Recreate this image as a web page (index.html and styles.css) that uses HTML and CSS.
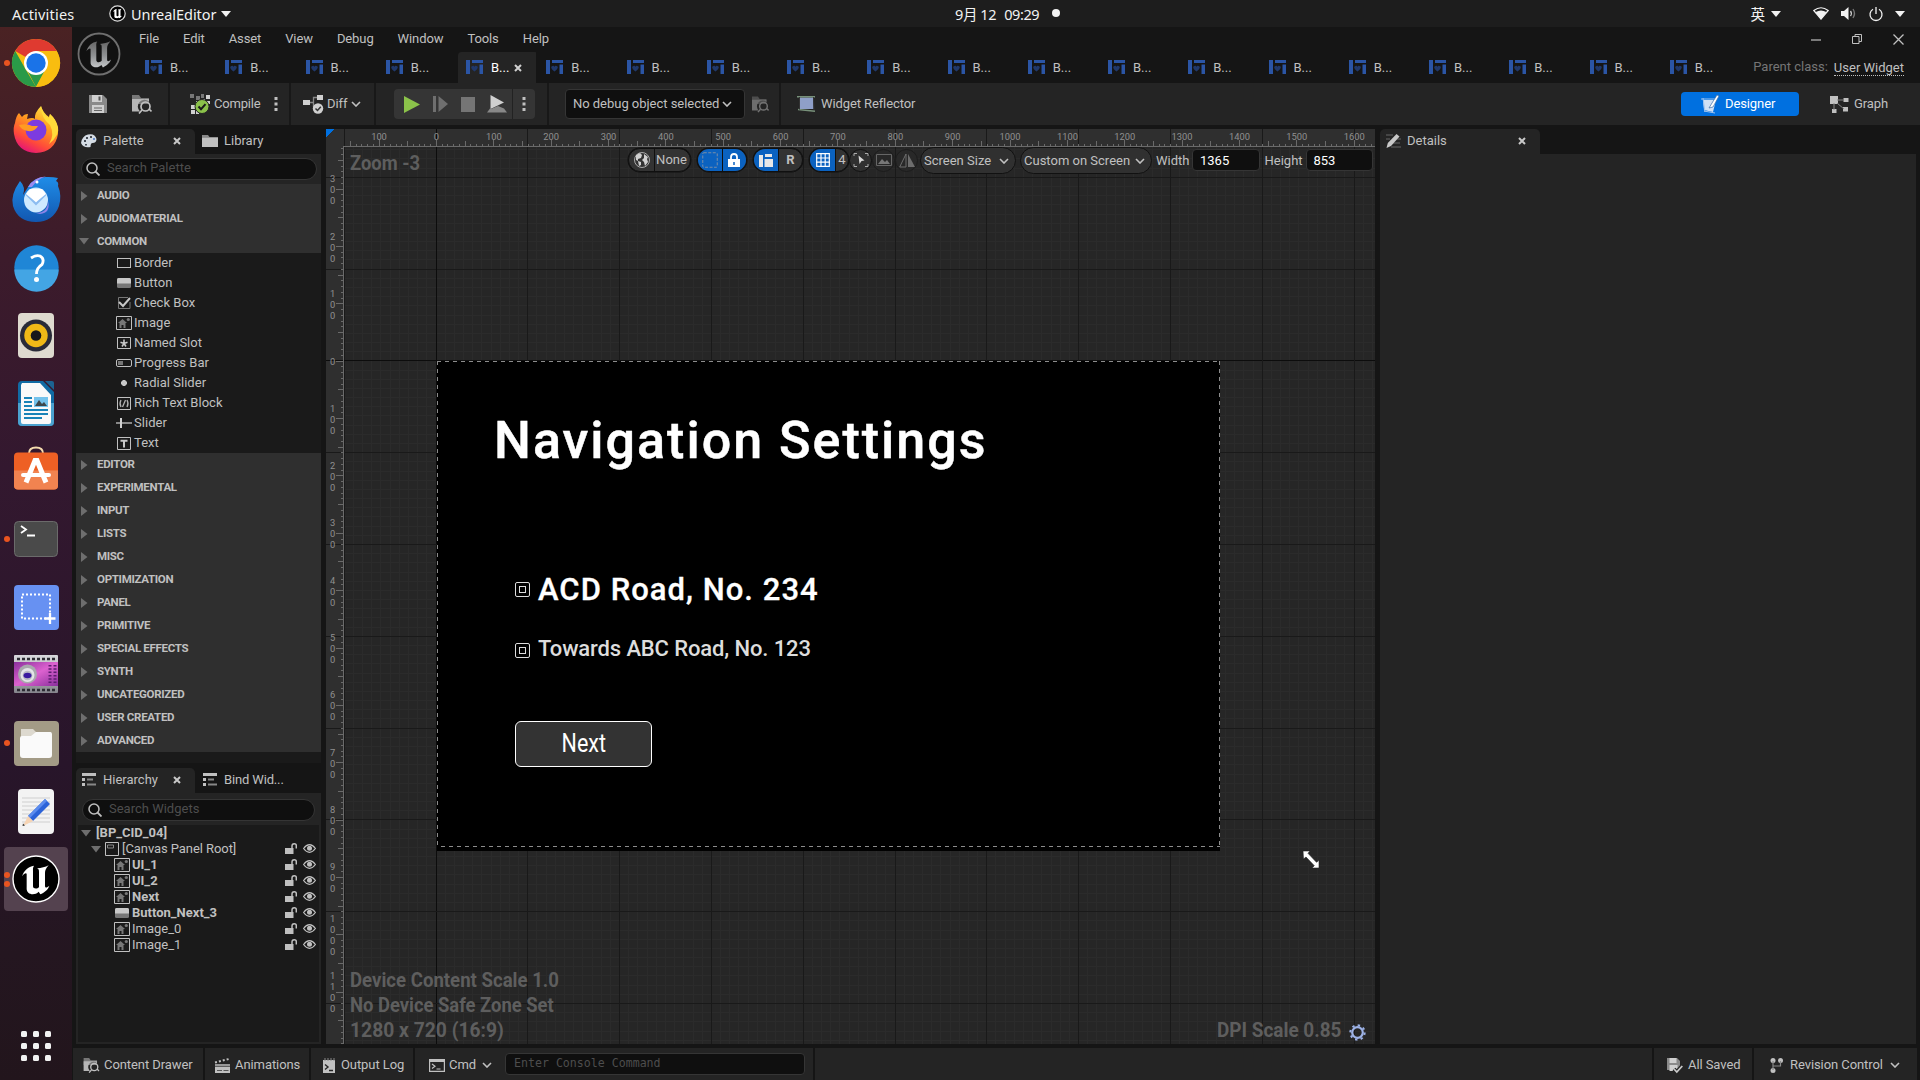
FILE: index.html
```html
<!DOCTYPE html>
<html lang="en">
<head>
<meta charset="utf-8">
<title>Unreal Editor</title>
<link rel="stylesheet" href="styles.css">
</head>
<body>
<svg class="defs" width="0" height="0">
  <defs>
    <linearGradient id="steel" x1="0" y1="0" x2="0" y2="1"><stop offset="0" stop-color="#666"/><stop offset=".55" stop-color="#8f9193"/><stop offset="1" stop-color="#c4c6c8"/></linearGradient>
    <linearGradient id="fox" x1=".8" y1="0" x2=".3" y2="1"><stop offset="0" stop-color="#fff04a"/><stop offset=".4" stop-color="#ff9a1f"/><stop offset=".75" stop-color="#ff4a3a"/><stop offset="1" stop-color="#e3127a"/></linearGradient>
    <linearGradient id="bird" x1="0" y1="0" x2="0" y2="1"><stop offset="0" stop-color="#1f8de8"/><stop offset="1" stop-color="#1257b0"/></linearGradient>
    <linearGradient id="film" x1="0" y1="0" x2="1" y2="1"><stop offset="0" stop-color="#8a2f9c"/><stop offset=".5" stop-color="#dc62cf"/><stop offset="1" stop-color="#8a2f9c"/></linearGradient>
    <linearGradient id="metal" x1="0" y1="0" x2="0" y2="1"><stop offset="0" stop-color="#d8d8dc"/><stop offset="1" stop-color="#85858c"/></linearGradient>
    <symbol id="u-glyph" viewBox="-42 -42 84 90"><path d="M-42-8C-36-26-24-37-6-40C-10-34-9-30-9-24V22C-9 30 4 31 9 24V-20C9-28 8-30 3-32C16-33 28-36 38-41C30-32 27-26 27-18V20C27 27 32 27 40 20C36 33 24 41 13 46L8 38C-2 48-16 47-23 41C-29 36-28 30-28 22V-14C-28-20-36-16-42-8Z"/></symbol>
    <symbol id="wbp" viewBox="0 0 17 14"><path fill="#2b55a5" d="M0 0h4v14H0zM6 0h11v3H6zM13.500 4.500H17V14h-3.500z"/><path fill="#20386b" d="M5.500 6.500c1.500-1.500 3-.5 3 .5 0-1 1.500-2 3-.5 1 1.500-1 3.500-3 5-2-1.500-4-3.500-3-5z"/></symbol>
    <symbol id="x" viewBox="0 0 8 8"><path d="M1 1l6 6M7 1L1 7" stroke="currentColor" stroke-width="2"/></symbol>
    <symbol id="chev" viewBox="0 0 10 6"><path d="M1 1l4 4 4-4" fill="none" stroke="currentColor" stroke-width="1.600"/></symbol>
    <symbol id="mag" viewBox="0 0 14 14"><circle cx="6" cy="6" r="5" fill="none" stroke="currentColor" stroke-width="1.500"/><path d="M9.500 9.500l4 4" stroke="currentColor" stroke-width="1.800"/></symbol>
    <symbol id="arrow" viewBox="0 0 7 10"><path fill="#6e6e6e" d="M0 0l6.500 5L0 10z"/></symbol>
    <symbol id="down" viewBox="0 0 10 7"><path fill="#6e6e6e" d="M0 0h10L5 6.500z"/></symbol>
    <symbol id="save" viewBox="0 0 18 18"><path fill="#8a8a8a" d="M0 0h14l4 4v14H0z"/><path fill="#d0d0d0" d="M3 0h10v7H3zM3 10h12v8H3z"/><path stroke="#666" d="M5 13h8M5 15.500h8"/><path fill="#555" d="M9.500 1.500h2v4h-2z"/></symbol>
    <symbol id="browse" viewBox="0 0 20 19"><path fill="#777" d="M0 0h7l2 3h8v6H0z"/><path fill="#b5b5b5" d="M0 4h17v2.500A6 6 0 0 0 8 16.500H0z"/><circle cx="13.500" cy="11.500" r="4.500" fill="none" stroke="currentColor" stroke-width="1.700"/><path d="M10 15l-3 3.500M17 14l2.500 2.500" stroke="currentColor" stroke-width="1.700"/></symbol>
    <symbol id="dots" viewBox="0 0 4 16"><path fill="currentColor" d="M.5 1h3v3h-3zM.5 6.500h3v3h-3zM.5 12h3v3h-3z"/></symbol>
    <symbol id="tree" viewBox="0 0 14 13"><path fill="#c0c0c0" d="M0 0h14v3H0zM0 5h3v3H0zM0 10h3v3H0z"/><path fill="#888" d="M5 5.500h6v2H5zM5 10.500h9v2H5z"/></symbol>
    <symbol id="image" viewBox="0 0 16 14"><path fill="none" stroke="#c0c0c0" d="M.5.500h15v13H.5z"/><path fill="#777" d="M2 7l4.500-4L11 7H9.500v5h-2V9h-2v3h-2V7z"/><circle cx="12.300" cy="3.500" r="1.600" fill="#777"/></symbol>
    <symbol id="button" viewBox="0 0 14 10"><rect width="14" height="10" rx="1.500" fill="#777"/><path fill="#c8c8c8" d="M0 5.500V1.500Q0 0 1.500 0h11Q14 0 14 1.500v4z"/></symbol>
    <symbol id="lock" viewBox="0 0 12 11"><path fill="currentColor" d="M0 5h8.500v6H0z"/><path d="M7 6V3q0-2.200 2.200-2.200T11.300 3v2.500" fill="none" stroke="currentColor" stroke-width="1.500"/></symbol>
    <symbol id="eye" viewBox="0 0 13 9"><path d="M.6 4.500Q3.300.7 6.500.7t5.900 3.800Q9.700 8.300 6.500 8.300T.6 4.500z" fill="none" stroke="currentColor" stroke-width="1.200"/><circle cx="6.500" cy="4.300" r="2.500" fill="currentColor"/></symbol>
    <symbol id="caret" viewBox="0 0 10 6"><path fill="#f2f2f2" d="M0 0h10L5 6z"/></symbol>
  </defs>
</svg>

<header class="topbar">
  <span class="activities">Activities</span>
  <svg class="app-icon" width="17" height="17" viewBox="0 0 17 17"><circle cx="8.500" cy="8.500" r="7.700" fill="#000" stroke="#ddd" stroke-width="1.200"/><use href="#u-glyph" x="3.500" y="3.500" width="10" height="10" fill="#fff"/></svg>
  <span class="app-name">UnrealEditor</span>
  <svg width="10" height="6"><use href="#caret"/></svg>
  <div class="clock"><span>9月 12</span><span>09:29</span><i class="clock-dot"></i></div>
  <div class="status">
    <span class="ime">英</span>
    <svg class="c1" width="10" height="6"><use href="#caret"/></svg>
    <svg class="wifi" width="16" height="13" viewBox="0 0 16 13"><path d="M.8 3.500Q8-2 15.200 3.500L8 12z" fill="none" stroke="#f2f2f2" stroke-width="1.200"/><path fill="#f2f2f2" d="M2.600 5Q8 2 13.400 5L8 12.500z"/></svg>
    <svg class="vol" width="15" height="13" viewBox="0 0 15 13"><path fill="#f2f2f2" d="M0 4h3l4.500-4v13L3 9H0z"/><path d="M9.500 4q1.800 2.500 0 5" fill="none" stroke="#ccc" stroke-width="1.300"/><path d="M12 2q3 4.500 0 9" fill="none" stroke="#777" stroke-width="1.300"/></svg>
    <svg class="power" width="14" height="14" viewBox="0 0 14 14"><path d="M4 2.300a6 6 0 1 0 6 0M7 0v7" fill="none" stroke="#f2f2f2" stroke-width="1.300"/></svg>
    <svg width="10" height="6"><use href="#caret"/></svg>
  </div>
</header>

<div class="desktop">
<nav class="dock">
  <div class="app run1"><svg width="48" height="48" viewBox="-24 -24 48 48"><circle r="24" fill="#f9bd10"/><path fill="#df3a30" d="M0 0L-20.800-12A24 24 0 0 1 20.800-12H0z"/><path fill="#2a9a48" d="M-20.800-12L-10 7L0 24A24 24 0 0 1-20.800-12z"/><path fill="#2a9a48" d="M-11 3L9 7L0 24z"/><path fill="#f9bd10" d="M10-12H20.800A24 24 0 0 1 0 24L10 6z"/><circle r="12" fill="#fff"/><circle r="9.700" fill="#1a73e8"/></svg></div>
  <div class="app"><svg width="46" height="48" viewBox="0 1 46 48"><path fill="url(#fox)" d="M2 17Q3 10 6 7l3 4Q11 8 15 8l-1 5Q20 11 22 13Q21 7 28 0Q30 7 36 11l1-3Q46 17 45 28Q42 46 23 47Q4 46 1 28Q0 21 2 17z"/><circle cx="23" cy="24" r="10.500" fill="#7c3be0"/><path fill="#ff9b22" d="M6 19Q14 17 19 20l6 0Q22 26 15 25Q8 24 6 19z"/><path fill="#ffdb3a" d="M28 0Q28 12 37 19Q42 29 36 38Q47 29 45 21Q43 13 37 8l-1 4Q30 8 28 0z"/></svg></div>
  <div class="app"><svg width="48" height="48" viewBox="0 0 48 48"><path fill="url(#bird)" d="M16 12Q22 1 36 2q6 0 10 1l-2 3q3 1 2 5Q50 20 47 31Q41 47 24 47Q6 47 1 31Q-2 20 8 6q6 6 3 14z"/><path fill="#9a8af0" d="M16 12Q22 2 34 1.500Q25 4 20 12z"/><ellipse cx="24" cy="25" rx="12" ry="12.500" fill="#cfeaff"/><path d="M14 19l10 10 10-10" fill="none" stroke="#8cbcf0" stroke-width="2"/><path fill="#fff" d="M14 19l10 8 10-8-4-5H18z"/><path fill="#8d84e8" d="M24 38q12 0 12-12q3 12-8 13z"/><circle cx="25" cy="7" r="1.500" fill="#fff"/></svg></div>
  <div class="app"><svg width="45" height="45" viewBox="0 0 45 45"><circle cx="22.500" cy="22.500" r="22.200" fill="#1f86d6"/><path fill="#43a5e4" d="M.3 24.500h44.400A22.200 22.200 0 0 1 .3 24.500z"/><path d="M17 13Q22 9.500 26 11Q31 14 28 19.500Q22.500 23 22.500 29" fill="none" stroke="#fff" stroke-width="2.800"/><circle cx="22.500" cy="34.500" r="2.500" fill="#fff"/></svg></div>
  <div class="app"><svg width="36" height="45" viewBox="0 0 36 45"><rect width="36" height="45" rx="4" fill="#dedacf"/><circle cx="18" cy="22.500" r="16" fill="#292b38"/><circle cx="18" cy="22.500" r="11.700" fill="#efb917"/><circle cx="18" cy="22.500" r="5.300" fill="#17171b"/></svg></div>
  <div class="app"><svg width="36" height="45" viewBox="0 0 36 45"><path fill="#116ba4" d="M4 0h21l11 11v30q0 4-4 4H4q-4 0-4-4V4q0-4 4-4z"/><path fill="#4ba2cf" d="M0 22h36v19q0 4-4 4H4q-4 0-4-4z"/><path fill="#f9f9f9" d="M4 2h18l11 12v27q0 2-2 2H5q-2 0-2-2V4z"/><path fill="#1c6392" d="M27 0h7q2 0 2 2v7z"/><path d="M6 17h8M6 21h8M6 25h8M6 29h24M6 33h24M6 37h18" stroke="#1883b8" stroke-width="2"/><path fill="#74c3ec" d="M16 16h14v10H16z"/><path fill="#3d474a" d="M17 25l4-6 3 4 2-2 3 4z"/></svg></div>
  <div class="app"><svg width="44" height="44" viewBox="0 3.500 44 44"><path d="M15 8Q15 2 22 2T29 8" fill="none" stroke="#f5dcae" stroke-width="2"/><rect y="7" width="44" height="37" rx="4" fill="#ee6024"/><path fill="#f18350" d="M0 25h44v15q0 4-4 4H4q-4 0-4-4z"/><path d="M12 37l9-22h2l9 22" fill="none" stroke="#fff" stroke-width="5"/><path d="M9 29.500h26" stroke="#fff" stroke-width="4" stroke-linecap="round"/></svg></div>
  <div class="app run1"><svg width="44" height="36" viewBox="0 0 44 36"><rect x=".5" y=".5" width="43" height="35" rx="4" fill="#4a4a4a" stroke="#6b6b6b"/><path d="M7 5l5 3.500L7 12M13 14.500h8" fill="none" stroke="#fff" stroke-width="1.800"/></svg></div>
  <div class="app"><svg width="45" height="45" viewBox="0 0 45 45"><rect width="45" height="45" rx="4" fill="#6791f2"/><path d="M8 9.500h28v24H8z" fill="none" stroke="#fff" stroke-width="2" stroke-dasharray="2 2"/><path d="M36 28v11M30.500 33.500h11" stroke="#fff" stroke-width="2.300"/></svg></div>
  <div class="app"><svg width="44" height="38" viewBox="0 1 44 38"><rect width="44" height="38" rx="1" fill="url(#metal)"/><path fill="url(#film)" d="M0 7h44v24H0z"/><path d="M3 4h38M3 35h38" stroke="#2c2c33" stroke-width="2.500" stroke-dasharray="3 2"/><path d="M36 10v19M41 10v19" stroke="#5d1c70" stroke-width="3" stroke-dasharray="1.500 1.800"/><circle cx="13.500" cy="19" r="9.500" fill="#a9a9ae"/><circle cx="13.500" cy="20" r="7" fill="#e4e4e8"/><circle cx="13.500" cy="20.500" r="4.800" fill="#b9b9c4"/><ellipse cx="13.500" cy="20.500" rx="4" ry="2.800" fill="#3a1aa0"/></svg></div>
  <div class="app run1"><svg width="45" height="45" viewBox="0 0 45 45"><rect width="45" height="45" rx="4" fill="#a39b86"/><path fill="#ddd9cf" d="M7 8h12l3 3h15v10H7z"/><path fill="#fafafa" d="M6 17q0-2 2-2h9l5-4h14q2 0 2 2v21q0 3-3 3H9q-3 0-3-3z"/></svg></div>
  <div class="app"><svg width="36" height="45" viewBox="0 0 36 45"><rect width="36" height="45" rx="4" fill="#f3f3f3"/><path d="M4 9h28M4 13h28M4 17h28M4 21h28M4 25h28M4 29h28M4 33h28" stroke="#cfcfcf"/><path fill="#2c63d8" d="M27 10l5 5-17 17-5-5z"/><path fill="#5b8bee" d="M27 10l2 2-17 17-2-2z"/><path fill="#f6d4b4" d="M10 27l5 5-10 5z"/><path fill="#333" d="M5 34.500l2 2L4.500 37z"/></svg></div>
  <div class="app run2 active"><svg width="48" height="48" viewBox="-24 -24 48 48"><circle r="23" fill="#000" stroke="#fff" stroke-width="1.400"/><use href="#u-glyph" x="-14" y="-14" width="28" height="30" fill="#fff"/></svg></div>
  <div class="apps"><i></i><i></i><i></i><i></i><i></i><i></i><i></i><i></i><i></i></div>
</nav>

<main class="editor">
  <div class="titlebar">
    <svg class="logo" width="44" height="44" viewBox="-22 -22 44 44"><circle r="20.500" fill="#111" stroke="#6f6f6f" stroke-width="1.800"/><use href="#u-glyph" x="-13" y="-13" width="26" height="27" fill="url(#steel)"/></svg>
    <div class="title-rows">
      <div class="menu"><span>File</span><span>Edit</span><span>Asset</span><span>View</span><span>Debug</span><span>Window</span><span>Tools</span><span>Help</span>
        <div class="winbtns">
          <svg width="10" height="12" viewBox="0 0 10 12"><path d="M0 7h10" stroke="#c0c0c0" stroke-width="1.200"/></svg>
          <svg width="10" height="10" viewBox="0 0 10 10"><path d="M.5 2.500h6.500v7H.5zM3 2.500v-2h6.500v7H7" fill="none" stroke="#c0c0c0"/></svg>
          <svg width="11" height="11" viewBox="0 0 11 11"><path d="M.5.500l10 10M10.500.5l-10 10" stroke="#c0c0c0" stroke-width="1.300"/></svg>
        </div>
      </div>
      <div class="tabs">
        <div class="tab"><svg width="17" height="14"><use href="#wbp"/></svg><span>B...</span></div>
        <div class="tab"><svg width="17" height="14"><use href="#wbp"/></svg><span>B...</span></div>
        <div class="tab"><svg width="17" height="14"><use href="#wbp"/></svg><span>B...</span></div>
        <div class="tab"><svg width="17" height="14"><use href="#wbp"/></svg><span>B...</span></div>
        <div class="tab current"><svg width="17" height="14"><use href="#wbp"/></svg><span>B...</span><svg width="8" height="8"><use href="#x"/></svg></div>
        <div class="tab"><svg width="17" height="14"><use href="#wbp"/></svg><span>B...</span></div>
        <div class="tab"><svg width="17" height="14"><use href="#wbp"/></svg><span>B...</span></div>
        <div class="tab"><svg width="17" height="14"><use href="#wbp"/></svg><span>B...</span></div>
        <div class="tab"><svg width="17" height="14"><use href="#wbp"/></svg><span>B...</span></div>
        <div class="tab"><svg width="17" height="14"><use href="#wbp"/></svg><span>B...</span></div>
        <div class="tab"><svg width="17" height="14"><use href="#wbp"/></svg><span>B...</span></div>
        <div class="tab"><svg width="17" height="14"><use href="#wbp"/></svg><span>B...</span></div>
        <div class="tab"><svg width="17" height="14"><use href="#wbp"/></svg><span>B...</span></div>
        <div class="tab"><svg width="17" height="14"><use href="#wbp"/></svg><span>B...</span></div>
        <div class="tab"><svg width="17" height="14"><use href="#wbp"/></svg><span>B...</span></div>
        <div class="tab"><svg width="17" height="14"><use href="#wbp"/></svg><span>B...</span></div>
        <div class="tab"><svg width="17" height="14"><use href="#wbp"/></svg><span>B...</span></div>
        <div class="tab"><svg width="17" height="14"><use href="#wbp"/></svg><span>B...</span></div>
        <div class="tab"><svg width="17" height="14"><use href="#wbp"/></svg><span>B...</span></div>
        <div class="tab"><svg width="17" height="14"><use href="#wbp"/></svg><span>B...</span></div>
        <div class="parent"><span>Parent class:</span><a>User Widget</a></div>
      </div>
    </div>
  </div>

  <div class="toolbar">
    <div class="tgroup g-file"><svg width="18" height="18"><use href="#save"/></svg><svg width="20" height="19"><use href="#browse"/></svg></div>
    <div class="tgroup g-compile">
      <svg width="20" height="20" viewBox="0 0 20 20"><path fill="#777" d="M0 0h4v4H0zM6 2h4v4H6zM11 0h3v4h-3z"/><path fill="#d0d0d0" d="M16 1h4v4h-4zM6 7h4v4H6zM1 11h4v4H1zM1 16h4v4H1zM6 12h3v8H6zM11 5h4v3h-4zM16 7h4v3h-4z"/><circle cx="12" cy="12.500" r="7" fill="#8bc24a" stroke="#242424"/><path d="M8.500 12.500l2.500 2.700 4.500-5" fill="none" stroke="#1a1a1a" stroke-width="2"/></svg>
      <span>Compile</span><svg class="kebab" width="4" height="16"><use href="#dots"/></svg></div>
    <div class="tgroup g-diff">
      <svg width="20" height="19" viewBox="0 0 20 19"><path fill="#d0d0d0" d="M0 5h7v5H0zM14 0h6v5h-6z"/><path d="M7 7.500h3.500v-5H14M10.500 7v5" fill="none" stroke="#888" stroke-width="1.300"/><circle cx="15" cy="13.500" r="5.200" fill="#d0d0d0"/><path d="M12.500 13.500l2 2 3.300-3.800" fill="none" stroke="#333" stroke-width="1.500"/></svg>
      <span>Diff</span><svg width="10" height="6"><use href="#chev"/></svg></div>
    <div class="tgroup g-play">
      <div class="playbox">
        <svg width="16" height="17" viewBox="0 0 16 17"><path fill="#8bc24a" d="M0 0l16 8.500L0 17z"/></svg>
        <svg width="15" height="16" viewBox="0 0 15 16"><path fill="#6f6f6f" d="M0 0h3v16H0zM5.500 0L15 8l-9.500 8z"/></svg>
        <svg width="14" height="15"><rect width="14" height="15" fill="#757575"/></svg>
        <svg width="20" height="18" viewBox="0 0 20 18"><path fill="#d0d0d0" d="M3.500 0L17 7.500 3.500 14z"/><path fill="#888" d="M0 17.500l3-4h2l6-2.500 6 2.500 3 4z"/></svg>
        <i class="psep"></i>
        <svg width="4" height="16"><use href="#dots"/></svg>
      </div>
    </div>
    <div class="tgroup g-debug">
      <div class="dropdown"><span>No debug object selected</span><svg width="10" height="6"><use href="#chev"/></svg></div>
      <svg class="dim" width="17" height="17"><use href="#browse"/></svg>
    </div>
    <div class="tgroup g-reflect">
      <svg width="19" height="16" viewBox="0 0 19 16"><path fill="#8f9fc8" d="M3 1.500h13l.5 11.500H2z"/><path d="M0 .7h18M1 13.500l17 1.800" stroke="#78917a" stroke-width="1.400"/><path d="M2.500 1v12.500M16.500 1l.5 13" stroke="#333"/></svg>
      <span>Widget Reflector</span></div>
    <div class="modes">
      <div class="designer"><svg width="19" height="19" viewBox="0 0 19 19"><path fill="#cfe0f5" d="M2 5h13l-3 12-9-2z"/><path d="M0 4h16M2 3l2 14M3 16l11 2" stroke="#9ec3ef"/><path fill="#fff" stroke="#3b6da8" stroke-width=".7" d="M16 0l2 1-6 11-4 1 3-5z"/></svg><span>Designer</span></div>
      <svg width="19" height="17" viewBox="0 0 19 17"><path fill="#c0c0c0" d="M0 0h8v8H0zM13.500 2h5v4h-5zM2 13h4.500v4H2zM13 11h5v4.500h-5z"/><path d="M7 4h7M4 7v7M7 7l7 6" stroke="#888"/></svg>
      <span>Graph</span>
    </div>
  </div>

  <div class="work">
    <aside class="left">
      <section class="panel palette">
        <div class="ptabs">
          <div class="ptab on"><svg width="16" height="14" viewBox="0 0 16 14"><path fill="#d5dce4" d="M0 9Q1 2 7 .5 14-1 15.500 5q0 4-4 4-2 0-2 4-7 1.500-9.500-4z"/><path fill="#454b55" d="M3 6h2v2H3zM5 3h2v2H5zM9 2h2v2H9zM4 10h2v1.500H4z"/><path fill="#6b91d0" d="M12 4h2v2h-2z"/></svg><span>Palette</span><svg class="pclose" width="8" height="8"><use href="#x"/></svg></div>
          <div class="ptab"><svg width="16" height="12" viewBox="0 0 16 12"><path fill="#888" d="M0 0h6l1.500 2H16v2H0z"/><path fill="#c0c0c0" d="M0 2.800h16V12H0z"/></svg><span>Library</span></div>
        </div>
        <div class="search"><svg width="14" height="14"><use href="#mag"/></svg><span>Search Palette</span></div>
        <div class="cats">
          <div class="cat"><svg width="7" height="10"><use href="#arrow"/></svg>AUDIO</div>
          <div class="cat"><svg width="7" height="10"><use href="#arrow"/></svg>AUDIOMATERIAL</div>
          <div class="cat open"><svg width="10" height="7"><use href="#down"/></svg>COMMON</div>
          <div class="item"><svg width="14" height="10"><rect x=".5" y=".5" width="13" height="9" fill="none" stroke="#c0c0c0"/></svg>Border</div>
          <div class="item"><svg width="14" height="10"><use href="#button"/></svg>Button</div>
          <div class="item"><svg width="14" height="12" viewBox="0 0 14 12"><path d="M11 .5H1.500v11H13V5" fill="none" stroke="#777"/><path d="M2 5l4 4 7-8" fill="none" stroke="#c8c8c8" stroke-width="2"/></svg>Check Box</div>
          <div class="item"><svg width="16" height="14"><use href="#image"/></svg>Image</div>
          <div class="item"><svg width="14" height="12" viewBox="0 0 14 12"><path d="M.5.500h13v11H.5z" fill="none" stroke="#c0c0c0"/><path d="M7 2.500v4M3.500 5.200L7 6.500l3.500-1.300M5 9.500l2-3 2 3" fill="none" stroke="#c8c8c8" stroke-width="1.600"/></svg>Named Slot</div>
          <div class="item"><svg width="16" height="8" viewBox="0 0 16 8"><rect x=".5" y=".5" width="15" height="7" rx="1.500" fill="none" stroke="#c0c0c0"/><path fill="#777" d="M2 2h5v4H2z"/></svg>Progress Bar</div>
          <div class="item"><svg width="6" height="6" viewBox="0 0 6 6"><path fill="#c8c8c8" d="M2 0h2l2 2v2L4 6H2L0 4V2z"/></svg>Radial Slider</div>
          <div class="item"><svg width="14" height="13" viewBox="0 0 14 13"><path d="M.5.500h13v12H.5z" fill="none" stroke="#c0c0c0"/><path d="M4 3Q2 6.500 4 10M10 3q2 3.500 0 7M8.500 3L5.500 10" fill="none" stroke="#b0b0b0" stroke-width="1.300"/></svg>Rich Text Block</div>
          <div class="item"><svg width="16" height="10" viewBox="0 0 16 10"><path fill="#888" d="M0 4h16v2H0z"/><path fill="#d0d0d0" d="M4 0h2v10H4z"/></svg>Slider</div>
          <div class="item"><svg width="14" height="13" viewBox="0 0 14 13"><path d="M.5.500h13v12H.5z" fill="none" stroke="#c0c0c0"/><path d="M3.500 3.700h7M7 3.500V10.500" stroke="#c8c8c8" stroke-width="2"/></svg>Text</div>
          <div class="cat"><svg width="7" height="10"><use href="#arrow"/></svg>EDITOR</div>
          <div class="cat"><svg width="7" height="10"><use href="#arrow"/></svg>EXPERIMENTAL</div>
          <div class="cat"><svg width="7" height="10"><use href="#arrow"/></svg>INPUT</div>
          <div class="cat"><svg width="7" height="10"><use href="#arrow"/></svg>LISTS</div>
          <div class="cat"><svg width="7" height="10"><use href="#arrow"/></svg>MISC</div>
          <div class="cat"><svg width="7" height="10"><use href="#arrow"/></svg>OPTIMIZATION</div>
          <div class="cat"><svg width="7" height="10"><use href="#arrow"/></svg>PANEL</div>
          <div class="cat"><svg width="7" height="10"><use href="#arrow"/></svg>PRIMITIVE</div>
          <div class="cat"><svg width="7" height="10"><use href="#arrow"/></svg>SPECIAL EFFECTS</div>
          <div class="cat"><svg width="7" height="10"><use href="#arrow"/></svg>SYNTH</div>
          <div class="cat"><svg width="7" height="10"><use href="#arrow"/></svg>UNCATEGORIZED</div>
          <div class="cat"><svg width="7" height="10"><use href="#arrow"/></svg>USER CREATED</div>
          <div class="cat"><svg width="7" height="10"><use href="#arrow"/></svg>ADVANCED</div>
        </div>
      </section>
      <section class="panel hierarchy">
        <div class="ptabs">
          <div class="ptab on"><svg width="14" height="13"><use href="#tree"/></svg><span>Hierarchy</span><svg class="pclose" width="8" height="8"><use href="#x"/></svg></div>
          <div class="ptab"><svg width="14" height="13"><use href="#tree"/></svg><span>Bind Wid...</span></div>
        </div>
        <div class="search"><svg width="14" height="14"><use href="#mag"/></svg><span>Search Widgets</span></div>
        <div class="treebox">
          <div class="node root"><svg width="10" height="7"><use href="#down"/></svg><b>[BP_CID_04]</b></div>
          <div class="node canvas-root"><svg width="10" height="7"><use href="#down"/></svg><svg class="cp" width="14" height="14" viewBox="0 0 14 14"><path d="M.5.500h13v13H.5z" fill="none" stroke="#c0c0c0"/><path d="M2.500 3h6v3h-6z" fill="none" stroke="#888"/></svg><span>[Canvas Panel Root]</span><svg class="lk" width="12" height="11"><use href="#lock"/></svg><svg class="ey" width="13" height="9"><use href="#eye"/></svg></div>
          <div class="node"><svg width="16" height="14"><use href="#image"/></svg><b>UI_1</b><svg class="lk" width="12" height="11"><use href="#lock"/></svg><svg class="ey" width="13" height="9"><use href="#eye"/></svg></div>
          <div class="node"><svg width="16" height="14"><use href="#image"/></svg><b>UI_2</b><svg class="lk" width="12" height="11"><use href="#lock"/></svg><svg class="ey" width="13" height="9"><use href="#eye"/></svg></div>
          <div class="node"><svg width="16" height="14"><use href="#image"/></svg><b>Next</b><svg class="lk" width="12" height="11"><use href="#lock"/></svg><svg class="ey" width="13" height="9"><use href="#eye"/></svg></div>
          <div class="node"><svg width="16" height="10"><use href="#button"/></svg><b>Button_Next_3</b><svg class="lk" width="12" height="11"><use href="#lock"/></svg><svg class="ey" width="13" height="9"><use href="#eye"/></svg></div>
          <div class="node"><svg width="16" height="14"><use href="#image"/></svg><span>Image_0</span><svg class="lk" width="12" height="11"><use href="#lock"/></svg><svg class="ey" width="13" height="9"><use href="#eye"/></svg></div>
          <div class="node"><svg width="16" height="14"><use href="#image"/></svg><span>Image_1</span><svg class="lk" width="12" height="11"><use href="#lock"/></svg><svg class="ey" width="13" height="9"><use href="#eye"/></svg></div>
        </div>
      </section>
    </aside>

    <section class="stage">
      <svg id="grid" class="grid" width="1049" height="915" shape-rendering="crispEdges"></svg>
      <div id="rulers" class="rulers"></div>
      <div class="preview">
        <svg class="outline" width="783" height="490" shape-rendering="crispEdges"><path d="M0 .5H783M.5 0V486M782.500 0V486M4 485.500H783" fill="none" stroke="#8c8c8c" stroke-dasharray="4 4"/></svg>
        <div class="h1">Navigation Settings</div>
        <i class="bullet b1"></i><div class="l1">ACD Road, No. 234</div>
        <i class="bullet b2"></i><div class="l2">Towards ABC Road, No. 123</div>
        <div class="next"><span>Next</span></div>
      </div>
      <div class="zoomlabel overlay">Zoom -3</div>
      <div class="devinfo overlay"><div><span class="d1">Device Content Scale 1.0</span></div><div><span class="d2">No Device Safe Zone Set</span></div><div><span class="d3">1280 x 720 (16:9)</span></div></div>
      <div class="dpi overlay"><span>DPI Scale 0.85</span></div>
      <svg class="gear" width="17" height="17" viewBox="-8.500 -8.500 17 17"><circle r="5.300" fill="none" stroke="#9db2e6" stroke-width="2.200"/><circle r="7.200" fill="none" stroke="#9db2e6" stroke-width="2" stroke-dasharray="2.400 3.250"/></svg>
      <svg class="cursor" width="18" height="18" viewBox="0 0 18 18"><path fill="#fff" stroke="#222" stroke-width=".6" d="M0 0h7L5 2.300l8.500 9 2.500-2V17H9l2.300-2.300L3 6 .5 8z"/></svg>
      <div class="vtools">
        <div class="pill p-none"><div class="seg"><svg width="16" height="16" viewBox="0 0 16 16"><circle cx="8" cy="8" r="7.500" fill="none" stroke="#aaa"/><path fill="#d0d0d0" d="M2 3l4-2 2 2-1 3-3 1v2l-2-1zM4 9l3 1v3l-2 1zM10 2l4 3-1 2 1 3-3 4-1-4-2-2 2-2z"/></svg></div><div class="seg">None</div></div>
        <div class="pill p-lock"><div class="seg blue"><svg width="16" height="16"><rect x=".75" y=".75" width="14.500" height="14.500" rx="1" fill="none" stroke="#7a8fa8" stroke-dasharray="3 1.500"/></svg></div><div class="seg blue"><svg width="12" height="14" viewBox="0 0 12 14"><path fill="#fff" d="M0 6h12v8H0z"/><path d="M3 7V4q0-3 3-3t3 3v3" fill="none" stroke="#fff" stroke-width="1.800"/><path d="M6 9v3" stroke="#0b62c0" stroke-width="1.500"/></svg></div></div>
        <div class="pill p-r"><div class="seg blue"><svg width="14" height="13" viewBox="0 0 14 13"><path fill="#e8e8e8" d="M0 1h4v12H0zM6 0h7v3H6zM5.500 5H14v8H5.500z"/></svg></div><div class="seg"><b>R</b></div></div>
        <div class="pill p-grid"><div class="seg blue"><svg width="14" height="14"><path d="M.7.700h12.600v12.600H.7zM5 0v14M9.200 0v14M0 5h14M0 9.200h14" fill="none" stroke="#fff" stroke-width="1.200"/></svg></div><div class="seg">4</div></div>
        <div class="round"><svg width="14" height="14" viewBox="0 0 14 14"><path d="M0 3V.5h3M11 .5h3V3M14 11v2.500h-3M3 13.500H0V11" fill="none" stroke="#aaa"/><path fill="#d8d8d8" d="M4.500 2.500l6 5-3 .5-2 3z"/></svg></div>
        <div class="round off"><svg width="16" height="12" viewBox="0 0 16 12"><path d="M.5.500h15v11H.5z" fill="none" stroke="#666"/><path fill="#777" d="M2 10l4-5 3 3 2-2 3 4z"/></svg></div>
        <div class="round off"><svg width="16" height="13" viewBox="0 0 16 13"><path d="M7 0v13H.7z" fill="none" stroke="#6d6d6d"/><path fill="#6d6d6d" d="M9 0v13h7z"/></svg></div>
        <div class="combo c-size"><span>Screen Size</span><svg width="10" height="6"><use href="#chev"/></svg></div>
        <div class="combo c-custom"><span>Custom on Screen</span><svg width="10" height="6"><use href="#chev"/></svg></div>
        <span class="lbl-w">Width</span><div class="num">1365</div>
        <span class="lbl-h">Height</span><div class="num">853</div>
      </div>
    </section>

    <aside class="panel details">
      <div class="ptabs"><div class="ptab on"><svg width="15" height="14" viewBox="0 0 15 14"><path d="M0 1h7M0 5h4M9 5h6M7 9h7M5 13h10" stroke="#666"/><path fill="#c8c8c8" d="M10.500 0l3 2.500L5 12l-4.500 2L1.800 9z"/></svg><span>Details</span><svg class="pclose" width="8" height="8"><use href="#x"/></svg></div></div>
      <div class="empty"></div>
    </aside>
  </div>

  <footer class="bottom">
    <div class="bseg s1"><svg width="17" height="15"><use href="#browse"/></svg><span>Content Drawer</span></div>
    <div class="bseg s2"><svg width="15" height="15" viewBox="0 0 15 15"><path d="M0 4.500L14 1" stroke="#c0c0c0" stroke-width="2" stroke-dasharray="2 2"/><path fill="#999" d="M0 6h15v2.500H0z"/><path fill="#c0c0c0" d="M0 9h15v6H0z"/><path stroke="#555" d="M2 12.500h5M8.500 12.500h5"/></svg><span>Animations</span></div>
    <div class="bseg s3"><svg width="12" height="15" viewBox="0 0 12 15"><path fill="#c0c0c0" d="M0 2h12v13H0z"/><path d="M2 0v3M5 0v3M8 0v3M11 0v3" stroke="#888"/><path d="M2 6.500l3 2.500-3 2.500M6 12.500h4" fill="none" stroke="#242424" stroke-width="1.400"/></svg><span>Output Log</span></div>
    <div class="bseg s4"><svg width="16" height="13" viewBox="0 0 16 13"><path d="M.6.600h14.800v11.800H.6z" fill="none" stroke="#c0c0c0" stroke-width="1.200"/><path fill="#c0c0c0" d="M0 0h16v3H0z"/><path d="M3 5l3 2.300-3 2.300M7.500 10h4" fill="none" stroke="#c0c0c0" stroke-width="1.200"/></svg><span class="cmd">Cmd</span><svg class="cc" width="10" height="6"><use href="#chev"/></svg><div class="console">Enter Console Command</div></div>
    <div class="bseg fill"></div>
    <div class="bseg s5"><svg width="16" height="15" viewBox="0 0 16 15"><path fill="#8a8a8a" d="M0 0h10l3 3v9H0z"/><path fill="#d0d0d0" d="M2.500 0h7v5h-7zM2.500 7h8v6h-8z"/><path d="M7 11l2.800 3L15 8" fill="none" stroke="#242424" stroke-width="4"/><path d="M7 11l2.800 3L15.300 8" fill="none" stroke="#c8c8c8" stroke-width="1.800"/></svg><span>All Saved</span></div>
    <div class="bseg s6"><svg width="13" height="15" viewBox="0 0 13 15"><circle cx="3" cy="2.500" r="2.500" fill="#c0c0c0"/><circle cx="10.500" cy="2.500" r="2.500" fill="#c0c0c0"/><circle cx="3" cy="12.500" r="2.500" fill="#c0c0c0"/><path d="M3 3v9M10.500 3v5H3" fill="none" stroke="#888" stroke-width="1.200"/></svg><span>Revision Control</span><svg width="10" height="6"><use href="#chev"/></svg></div>
  </footer>
</main>
</div>
<script src="script.js"></script>
</body>
</html>
```
FILE: styles.css
```css
* { box-sizing: border-box; }
body { margin: 0; width: 1920px; height: 1080px; overflow: hidden; background: #151515; color: #c0c0c0; font: 13px/16px Roboto, "Liberation Sans", sans-serif; display: flex; flex-direction: column; white-space: nowrap; }
svg { flex: none; display: block; overflow: visible; }
.defs { position: absolute; }
i { display: block; flex: none; }

/* system bar */
.topbar { height: 27px; flex: none; background: #1d1d1d; color: #f2f2f2; display: flex; align-items: center; padding-left: 12px; font: 14.5px/20px "Noto Sans", "Noto Sans CJK SC", sans-serif; position: relative; }
.activities { width: 97px; letter-spacing: .2px; }
.app-name { margin: 0 5px 0 5px; letter-spacing: -.05px; }
.clock { position: absolute; left: 955px; top: 4px; display: flex; align-items: center; gap: 8px; letter-spacing: -.4px; }
.clock-dot { width: 8px; height: 8px; border-radius: 50%; background: #f2f2f2; margin-left: 5px; margin-top: -2px; }
.status { margin-left: auto; display: flex; align-items: center; padding-right: 15px; }
.ime { margin-right: 6px; }
.c1 { margin-right: 32px; }
.wifi { margin-right: 12px; }
.vol { margin-right: 13px; }
.power { margin-right: 12px; }

.desktop { flex: 1; display: flex; min-height: 0; }

/* dock */
.dock { width: 72px; flex: none; background: linear-gradient(#4a2223 0, #3c1b2b 22%, #33182f 42%, #28152a 70%, #241620 88%, #22151c 100%); display: flex; flex-direction: column; padding-top: 2px; }
.app { height: 68px; flex: none; display: flex; align-items: center; justify-content: center; position: relative; }
.app.active::before { content: ""; position: absolute; inset: 2px 4px; border-radius: 4px; background: #54424f; }
.app svg { position: relative; }
.run1::after, .run2::after { content: ""; position: absolute; left: 4px; top: 31px; width: 6px; height: 6px; border-radius: 50%; background: #e95420; }
.run2::after { top: 27px; box-shadow: 0 9px #e95420; }
.apps { margin: 118px 0 0 21px; display: grid; grid-template-columns: repeat(3, 6px); gap: 6px; }
.apps i { width: 6px; height: 6px; border-radius: 1.5px; background: #f2f2f2; }

/* editor frame */
.editor { flex: 1; display: flex; flex-direction: column; min-width: 0; }
.titlebar { height: 56px; flex: none; display: flex; }
.logo { margin: 5px 0 0 5px; }
.title-rows { flex: 1; padding-left: 16px; display: flex; flex-direction: column; }
.menu { height: 25px; padding: 4px 16px 0 2px; display: flex; gap: 24px; letter-spacing: -.1px; }
.winbtns { margin-left: auto; display: flex; align-items: center; gap: 31px; height: 16px; }
.tabs { flex: 1; display: flex; }
.tab { width: 80.26px; flex: none; display: flex; align-items: flex-start; padding: 8px 0 0 8px; }
.tab > svg:first-child { margin-right: 8px; }
.tab span { line-height: 16px; width: 16px; }
.tab.current { color: #fff; background: linear-gradient(#242424, #242424) 0 0 / 78px 100% no-repeat; border-radius: 4px 4px 0 0; }
.tab.current span { margin-right: 7px; }
.tab.current svg:last-child { margin-top: 4px; color: #d0d0d0; }
.parent { margin-left: auto; padding: 7px 16px 0 0; display: flex; gap: 6px; color: #757575; }
.parent a { color: #c0c0c0; border-bottom: 1px dotted #c0c0c0; height: 17px; line-height: 17px; }

.toolbar { height: 42px; flex: none; background: #242424; display: flex; align-items: stretch; letter-spacing: -.1px; }
.tgroup { display: flex; align-items: center; border-right: 2px solid #181818; }
.g-file { width: 98px; padding-left: 17px; gap: 25px; }
.g-compile { width: 121px; padding-left: 20px; gap: 4px; }
.g-compile span { width: 46px; letter-spacing: -.2px; }
.kebab { margin-left: 10px; }
.g-diff { width: 85px; padding-left: 12px; gap: 4px; }
.g-play { width: 173px; padding-left: 18px; }
.playbox { width: 141px; height: 30px; background: #353535; border-radius: 4px; display: flex; align-items: center; padding-left: 10px; }
.playbox svg:nth-child(1) { margin-right: 13px; }
.playbox svg:nth-child(2) { margin-right: 13px; }
.playbox svg:nth-child(3) { margin-right: 12px; }
.psep { width: 1px; height: 30px; background: #222; margin: 0 9px 0 5px; }
.g-debug { width: 232px; padding-left: 16px; gap: 7px; }
.dropdown { width: 180px; height: 30px; border: 1px solid #353535; border-radius: 4px; background: #0f0f0f; display: flex; align-items: center; padding: 0 12px 0 7px; justify-content: space-between; letter-spacing: -.03px; }
.dim { opacity: .5; }
.g-reflect { border: 0; padding-left: 16px; gap: 5px; }
.modes { margin-left: auto; display: flex; align-items: center; padding-right: 32px; gap: 5px; }
.designer { width: 118px; height: 24px; border-radius: 4px; background: #0070e0; color: #fff; display: flex; align-items: center; padding-left: 20px; gap: 5px; margin-right: 26px; }

.work { flex: 1; display: flex; padding: 4px 4px 4px 4px; min-height: 0; }
.left { width: 245px; margin-right: 5px; display: flex; flex-direction: column; }
.panel { display: flex; flex-direction: column; }
.ptabs { height: 25px; flex: none; display: flex; }
.ptab { padding: 0 0 2px 7px; display: flex; align-items: center; gap: 6px; }
.ptab.on { width: 119px; background: #242424; border-radius: 5px 5px 0 0; }
.ptab .pclose { margin-left: auto; margin-right: 14px; color: #c8c8c8; }
.search { height: 22px; flex: none; border: 1px solid #353535; border-radius: 11px; background: #0f0f0f; color: #4d4d4d; display: flex; align-items: center; padding-left: 4px; }
.search svg { color: #c0c0c0; margin-right: 7px; }
.search span { margin-top: -2px; }

.palette { height: 634px; background: linear-gradient(#151515 25px, #242424 25px 55px, #1a1a1a 55px); margin-bottom: 5px; }
.palette .search { margin: 4px 4px 4px 5px; }
.palette .ptab.on { padding-left: 5px; }
.cat { height: 23px; background: #2f2f2f; font-weight: 700; font-size: 11.5px; letter-spacing: -.3px; line-height: 22px; display: flex; align-items: center; padding: 0 0 1px 5px; }
.cat svg { margin: 1px 9px 0 0; }
.cat.open { padding-left: 3px; }
.cat.open svg { margin-right: 8px; }
.item { height: 20px; display: grid; grid-template-columns: 16px 1fr; column-gap: 2px; align-items: center; padding-left: 40px; line-height: 20px; letter-spacing: .03px; }
.item svg { justify-self: center; }

.hierarchy { flex: 1; background: linear-gradient(#151515 25px, #242424 25px); }
.hierarchy .ptab { padding-left: 6px; }
.hierarchy .ptab span { margin-left: 1px; }
.hierarchy .ptab:not(.on) { padding-left: 8px; letter-spacing: -.15px; }
.hierarchy .search { margin: 6px 6px 4px 6px; padding-left: 5px; }
.treebox { flex: 1; background: #1a1a1a; margin: 0 2px 2px; }
.node { height: 16px; display: flex; align-items: center; padding: 0 3px 0 36px; gap: 2px; }
.node.root { padding-left: 3px; gap: 5px; }
.node.canvas-root { padding-left: 13px; gap: 3px; letter-spacing: -.07px; }
.canvas-root .cp { margin-left: 1px; }
.lk { margin: -2px 4px 0 auto; }
.ey { margin-top: -2px; }
.canvas-root .ey { margin-left: -1px; }

/* design surface */
.stage { width: 1049px; position: relative; background: #262626; overflow: hidden; }
.grid { position: absolute; left: 0; top: 0; }
.rulers { position: absolute; inset: 0; font-size: 9.33px; line-height: 11px; color: #8f8f8f; }
.rulers span { position: absolute; transform: translateX(-50%); text-align: center; }
.rulers .hl { top: 2px; }
.rulers .vl { left: 6.5px; transform: translate(-50%, -50%); width: 7px; white-space: normal; }
.preview { position: absolute; left: 111px; top: 232px; width: 783px; height: 490px; background: #000; color: #fff; font-weight: 500; }
.outline { position: absolute; left: 0; top: 0; }
.preview > div, .bullet { position: absolute; }
.h1 { left: 57px; top: 50px; font-size: 52px; line-height: 60px; letter-spacing: 2px; -webkit-text-stroke: .5px #fff; }
.bullet { width: 15px; height: 15px; border: 1.5px solid #ddd; border-radius: 2px; left: 78px; }
.bullet::after { content: ""; position: absolute; inset: 3px; border: 1.5px solid #ddd; }
.b1 { top: 221px; }
.b2 { top: 282px; }
.l1 { left: 101px; top: 209px; font-size: 31px; line-height: 40px; letter-spacing: 1.03px; -webkit-text-stroke: .3px #fff; }
.l2 { left: 101px; top: 273px; font-size: 22px; line-height: 30px; color: #ddd; letter-spacing: -.12px; }
.next { left: 78px; top: 360px; width: 137px; height: 46px; border: 1.3px solid #fff; border-radius: 6px; background: #333; display: flex; align-items: center; justify-content: center; font-size: 25px; font-weight: 400; }
.next span { transform: scaleX(.86); }
.overlay { position: absolute; color: #5e5e5e; font-size: 20px; font-weight: 700; line-height: 25px; }
.overlay span { display: inline-block; transform-origin: 0 50%; }
.zoomlabel { left: 24px; top: 22px; transform: scaleX(.92); transform-origin: 0 50%; }
.devinfo { left: 24px; top: 839px; }
.devinfo .d1 { transform: scaleX(.93); }
.devinfo .d2 { transform: scaleX(.92); }
.devinfo .d3 { transform: scaleX(.965); }
.dpi { right: 34px; top: 889px; }
.dpi span { transform: scaleX(.947); transform-origin: 100% 50%; }
.gear { position: absolute; left: 1023px; top: 895px; }
.cursor { position: absolute; left: 977px; top: 722px; }
.vtools { position: absolute; left: 302px; top: 17px; height: 28px; display: flex; align-items: center; }
.pill { height: 24px; border: 1px solid #101010; border-radius: 12px; overflow: hidden; display: flex; background: #333; margin-right: 6px; box-shadow: 0 0 0 .5px #101010; }
.seg { display: flex; align-items: center; justify-content: center; width: 25px; }
.seg + .seg { border-left: 1px solid #101010; }
.blue { background: #0b62c0; }
.p-none { width: 63px; }
.p-none .seg + .seg { flex: 1; padding-right: 2px; }
.p-lock, .p-r { width: 50px; }
.p-grid { width: 40px; margin-right: 0; }
.p-grid .seg + .seg { flex: 1; }
.round { width: 23px; height: 23px; border: 1px solid #111; border-radius: 50%; background: #303030; display: flex; align-items: center; justify-content: center; }
.round.off { background: #282828; border-color: #1c1c1c; }
.combo { height: 27px; border: 1px solid #111; border-radius: 14px; background: #303030; display: flex; align-items: center; justify-content: space-between; padding: 1px 6px 0 3px; }
.c-size { width: 96px; margin: 0 4px 0 2px; }
.c-custom { width: 132px; margin-right: 4px; }
.lbl-w, .lbl-h { width: 36px; padding-top: 1px; }
.lbl-h { margin-left: 5px; width: 41px; }
.num { width: 67.5px; height: 22px; border: 1px solid #353535; border-radius: 4px; background: #0f0f0f; color: #fff; line-height: 21px; padding-left: 7px; }

.details { flex: 1; margin-left: 5px; }
.details .ptab.on { width: 160px; padding-left: 6px; }
.empty { flex: 1; background: #242424; }

.bottom { height: 32px; flex: none; display: flex; gap: 2px; padding: 0 3px 0 1px; }
.bseg { background: #242424; display: flex; align-items: center; gap: 5px; padding-top: 2px; letter-spacing: -.08px; }
.s1 { width: 130px; padding-left: 10px; gap: 4px; }
.s2 { width: 104px; padding-left: 10px; }
.s3 { width: 102px; padding-left: 12px; gap: 6px; }
.s4 { width: 398px; padding-left: 14px; gap: 4px; }
.cmd { width: 27px; }
.cc { margin-left: 2px; }
.console { width: 300px; height: 22px; margin: -3px 0 0 9px; border: 1px solid #353535; border-radius: 4px; background: #0f0f0f; color: #4d4d4d; font: 11.6px/19px "DejaVu Sans Mono", monospace; letter-spacing: 0; padding-left: 8px; }
.fill { flex: 1; }
.s5 { width: 98px; padding-left: 13px; }
.s6 { width: 163px; padding-left: 16px; gap: 7px; }
```
FILE: script.js
```js
// Draws the design surface grid, the ruler ticks and the ruler labels.
(function () {
  var W = 1049, H = 915, OX = 110.4, OY = 232.2, UNIT = 57.36, RW = 18;
  var GX = 110, GY = 231.9, MAJOR = 91.8;
  var out = [];
  function rect(x, y, w, h, c) {
    out.push('<rect x="' + x + '" y="' + y + '" width="' + w + '" height="' + h + '" fill="' + c + '"/>');
  }
  var i, p;
  for (i = -30; i < 120; i++) {
    if (i % 10 === 0) continue;
    p = Math.floor(GX + i * MAJOR / 10);
    if (p > RW && p < W) rect(p, RW, 1, H, '#2b2b2b');
    p = Math.floor(GY + i * MAJOR / 10);
    if (p > RW && p < H) rect(RW, p, W, 1, '#2b2b2b');
  }
  rect(0, 0, W, 17, '#2f2f2f');
  rect(0, 0, 17, H, '#2f2f2f');
  for (i = -3; i < 12; i++) {
    p = Math.floor(GX + i * MAJOR);
    if (p > 0) rect(p, 0, 1, H, i === 0 ? '#0c0c0c' : '#191919');
    p = Math.floor(GY + i * MAJOR);
    if (p > 0) rect(0, p, W, 1, i === 0 ? '#0c0c0c' : '#191919');
  }
  rect(17, 17, W, 1, '#6a6a6a');
  rect(17, 17, 1, H, '#6a6a6a');
  for (i = -40; i < 170; i++) {
    var hundred = i % 10 === 0, fifty = i % 5 === 0;
    p = Math.floor(OX + i * UNIT / 10);
    var hl = hundred ? 6 : fifty ? 5 : 2;
    if (p > 18 && p < W) rect(p, 17 - hl, 1, hl, '#6a6a6a');
    p = Math.floor(OY + i * UNIT / 10);
    var vl = hundred ? 7 : fifty ? 5 : 2;
    if (p > 18 && p < H) rect(17 - vl, p, vl, 1, '#6a6a6a');
  }
  out.push('<path d="M0 0h8L0 8z" fill="#0070e0"/>');
  document.getElementById('grid').innerHTML = out.join('');

  var labels = '';
  for (i = -1; i <= 16; i++) {
    labels += '<span class="hl" style="left:' + (OX + i * UNIT).toFixed(1) + 'px">' + Math.abs(i * 100) + '</span>';
  }
  for (i = -3; i <= 11; i++) {
    labels += '<span class="vl" style="top:' + (OY + i * UNIT).toFixed(1) + 'px">' + String(Math.abs(i * 100)).split('').join('<br>') + '</span>';
  }
  document.getElementById('rulers').innerHTML = labels;
})();
```
